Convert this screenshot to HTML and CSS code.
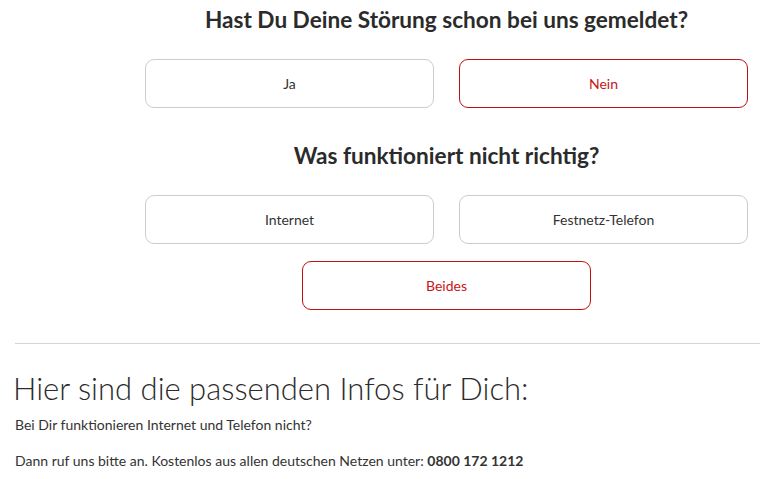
FILE: index.html
```html
<!DOCTYPE html>
<html lang="de">
<head>
<meta charset="utf-8">
<title>Störung</title>
<link rel="stylesheet" href="styles.css">
</head>
<body>
<main class="page">
  <section class="wizard">
    <h2 class="question">Hast Du Deine Störung schon bei uns gemeldet?</h2>
    <div class="choices">
      <button class="choice">Ja</button>
      <button class="choice choice--active">Nein</button>
    </div>
    <h2 class="question question--second">Was funktioniert nicht richtig?</h2>
    <div class="choices">
      <button class="choice">Internet</button>
      <button class="choice">Festnetz-Telefon</button>
      <button class="choice choice--active choice--center">Beides</button>
    </div>
  </section>
  <section class="result">
    <h1 class="result__title">Hier sind die passenden Infos für Dich:</h1>
    <p class="result__text">Bei Dir funktionieren Internet und Telefon nicht?</p>
    <p class="result__text">Dann ruf uns bitte an. Kostenlos aus allen deutschen Netzen unter: <strong>0800 172 1212</strong></p>
  </section>
</main>
</body>
</html>
```
FILE: styles.css
```css
* { box-sizing: border-box; }
html, body { margin: 0; padding: 0; background: #fff; }
body {
  font-family: "Lato", "Open Sans", sans-serif;
  color: #333;
}
.page { width: 760px; overflow: hidden; }
.wizard {
  padding: 5px 12px 33px 145px;
}
.question {
  margin: 0;
  font-size: 22.6px;
  line-height: 30px;
  font-weight: 700;
  text-align: center;
  color: #2b2b2b;
}
.question--second { margin-top: 33px; }
.choices {
  display: grid;
  grid-template-columns: 289px 289px;
  column-gap: 25px;
  row-gap: 17px;
  margin-top: 24px;
}
.choice {
  height: 49px;
  border: 1px solid #cccccc;
  border-radius: 9px;
  background: #fff;
  font-family: inherit;
  font-size: 14px;
  color: #333;
  padding: 0;
}
.choice--active {
  border-color: #c20f0f;
  color: #c71414;
}
.choice--center {
  grid-column: 1 / span 2;
  justify-self: center;
  width: 289px;
}
.result {
  margin-left: 15px;
  border-top: 1px solid #d4d4d4;
  padding-top: 24px;
}
.result__title {
  margin: 0 0 0 -2px;
  font-size: 31px;
  line-height: 40px;
  font-weight: 300;
  color: #2b2b2b;
}
.result__text {
  margin: 7px 0 0;
  font-size: 14px;
  line-height: 20px;
}
.result__text + .result__text { margin-top: 16px; }
.result__text strong { font-weight: 700; }
```
